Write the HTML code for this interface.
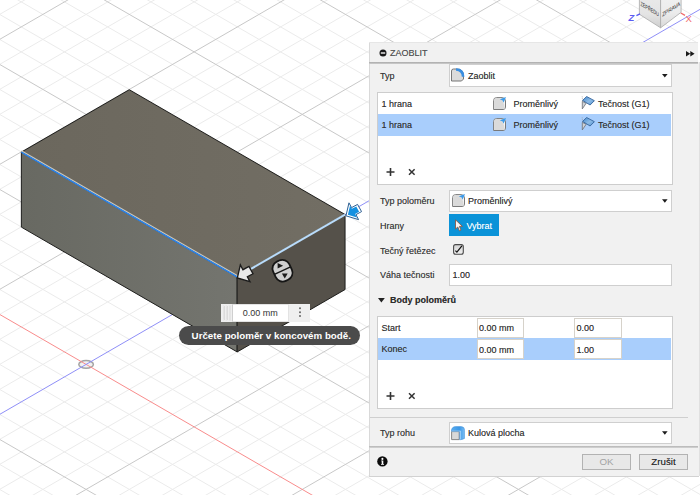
<!DOCTYPE html>
<html lang="cs"><head><meta charset="utf-8"><title>Zaoblit</title>
<style>
html,body{margin:0;padding:0;background:#fff;}
body{width:700px;height:495px;overflow:hidden;font-family:"Liberation Sans",sans-serif;font-size:9px;color:#333;}
#root{position:relative;width:700px;height:495px;overflow:hidden;}
#cv{position:absolute;left:0;top:0;}
.abs{position:absolute;}
#panel{text-shadow:0 0 .6px rgba(40,40,40,.5);position:absolute;left:369px;top:43px;width:330px;height:433px;background:#f1f1f1;box-sizing:border-box;border-left:1px solid #d9d9d9;box-shadow:0 1px 0 0 #d2d2d2, 1px 0 0 0 #e0e0e0, 0 -1px 0 0 #e6e6e6;}
#hdr{position:absolute;left:0;top:0;width:327px;height:19px;background:#f1f1f1;}
#hline{position:absolute;left:-1px;top:19px;width:329px;height:2px;background:linear-gradient(#a9a9a9,#cfcfcf);}
.lbl{position:absolute;left:10px;white-space:nowrap;line-height:10px;color:#3a3a3a;}
.dd{position:absolute;left:79px;width:223px;height:22px;background:#fff;border:1px solid #cfcfcf;box-sizing:border-box;}
.dd .txt{position:absolute;left:18px;top:5px;line-height:10px;white-space:nowrap;color:#333;}
.dd .arr{position:absolute;right:3.4px;top:8.2px;width:5.6px;height:3.6px;background:#1c1c1c;clip-path:polygon(0 0,100% 0,50% 100%);}
.box{position:absolute;left:7px;width:296px;background:#fff;border:1px solid #cdcdcd;box-sizing:border-box;}
.row{position:absolute;left:0;width:294px;height:21px;}
.row.sel{background:#a9cefc;height:22px;width:293px;}
.row span{position:absolute;top:6px;line-height:10px;white-space:nowrap;color:#333;}
.cell{position:absolute;width:47px;height:20px;background:#fff;border:1px solid #d6d2ca;box-sizing:border-box;}
.cell span{position:absolute;left:1.4px;top:5px;line-height:10px;color:#333;}
.btn{position:absolute;top:411px;height:16px;box-sizing:border-box;border:1px solid #b2b2b2;background:#e8e8e8;font-size:9.75px;line-height:14px;text-align:center;color:#2a2a2a;}

</style></head><body>
<div id="root">
<svg id="cv" width="700" height="495" viewBox="0 0 700 495">
<rect width="700" height="495" fill="#fff"/>
<path d="M0 -385.39 L700 19.43 M0 -360.39 L700 44.43 M0 -335.39 L700 69.43 M0 -285.39 L700 119.43 M0 -260.39 L700 144.43 M0 -235.39 L700 169.43 M0 -210.39 L700 194.43 M0 -160.39 L700 244.43 M0 -135.39 L700 269.43 M0 -110.39 L700 294.43 M0 -85.39 L700 319.43 M0 14.19 L700 -390.63 M0 -35.39 L700 369.43 M0 64.19 L700 -340.63 M0 -10.39 L700 394.43 M0 89.19 L700 -315.63 M0 14.61 L700 419.43 M0 114.19 L700 -290.63 M0 39.61 L700 444.43 M0 139.19 L700 -265.63 M0 89.61 L700 494.43 M0 189.19 L700 -215.63 M0 114.61 L700 519.43 M0 214.19 L700 -190.63 M0 139.61 L700 544.43 M0 239.19 L700 -165.63 M0 164.61 L700 569.43 M0 264.19 L700 -140.63 M0 214.61 L700 619.43 M0 314.19 L700 -90.63 M0 239.61 L700 644.43 M0 339.19 L700 -65.63 M0 264.61 L700 669.43 M0 364.19 L700 -40.63 M0 289.61 L700 694.43 M0 389.19 L700 -15.63 M0 339.61 L700 744.43 M0 439.19 L700 34.37 M0 364.61 L700 769.43 M0 464.19 L700 59.37 M0 389.61 L700 794.43 M0 489.19 L700 84.37 M0 414.61 L700 819.43 M0 514.19 L700 109.37 M0 464.61 L700 869.43 M0 564.19 L700 159.37 M0 489.61 L700 894.43 M0 589.19 L700 184.37 M0 614.19 L700 209.37 M0 639.19 L700 234.37 M0 689.19 L700 284.37 M0 714.19 L700 309.37 M0 739.19 L700 334.37 M0 764.19 L700 359.37 M0 814.19 L700 409.37 M0 839.19 L700 434.37 M0 864.19 L700 459.37 M0 889.19 L700 484.37" stroke="#ebebeb" stroke-width="1" fill="none"/>
<path d="M0 -310.39 L700 94.43 M0 -185.39 L700 219.43 M0 -60.39 L700 344.43 M0 39.19 L700 -365.63 M0 64.61 L700 469.43 M0 164.19 L700 -240.63 M0 189.61 L700 594.43 M0 289.19 L700 -115.63 M0 439.61 L700 844.43 M0 539.19 L700 134.37 M0 664.19 L700 259.37 M0 789.19 L700 384.37" stroke="#c8c8c8" stroke-width="1" fill="none"/>
<ellipse cx="86.1" cy="364.4" rx="7.3" ry="3.8" fill="#f1f1f1" stroke="#a4a4a4" stroke-width="1.5"/>
<path d="M0 314.61 L700 719.43" stroke="#f98c8c" stroke-width="1" fill="none"/>
<path d="M0 414.19 L700 9.37" stroke="#8f8ff8" stroke-width="1" fill="none"/>
<defs><linearGradient id="gl" x1="0" y1="0" x2="1" y2="0"><stop offset="0" stop-color="#686962"/><stop offset="1" stop-color="#74756f"/></linearGradient><linearGradient id="gt" x1="0" y1="0" x2="1" y2="0"><stop offset="0" stop-color="#6b675d"/><stop offset="1" stop-color="#726e64"/></linearGradient></defs>
<polygon points="21.36,152.12 129.26,89.72 345.06,214.52 237.16,276.92" fill="url(#gt)" stroke="#1e1e1c" stroke-width="1" stroke-linejoin="round"/>
<polygon points="21.36,152.12 237.16,276.92 237.16,351.92 21.36,227.12" fill="url(#gl)" stroke="#1e1e1c" stroke-width="1" stroke-linejoin="round"/>
<polygon points="237.16,276.92 345.06,214.52 345.06,289.52 237.16,351.92" fill="#55514a" stroke="#1e1e1c" stroke-width="1" stroke-linejoin="round"/>
<path d="M21.36,152.12 L237.16,276.92" stroke="#cfc9ba" stroke-width="1.3" transform="translate(0,-1.25)"/>
<path d="M21.36,152.12 L237.16,276.92" stroke="#2b86f0" stroke-width="1.45"/>
<path d="M237.16,276.92 L345.06,214.52" stroke="#b9dcfb" stroke-width="2"/>
<path d="M237.36 277.92 L240.36 264.92 L242.96 269.72 L248.96 266.52 L252.96 273.72 L247.36 276.72 L249.96 281.72 Z" fill="#e9e9e9" stroke="#1c1c1c" stroke-width="1.35" stroke-linejoin="miter"/>
<path d="M345.96 215.82 L348.96 202.82 L351.56 207.62 L357.56 204.42 L361.56 211.62 L355.96 214.62 L358.56 219.62 Z" fill="#fff" stroke="#2d5f93" stroke-width="1" stroke-linejoin="miter"/>
<path d="M345.96 215.82 L348.96 202.82 L351.56 207.62 L357.56 204.42 L361.56 211.62 L355.96 214.62 L358.56 219.62 Z" fill="#1590e0" transform="translate(353.9 211.23) scale(.72) translate(-354.3 -210.93)"/>
<g transform="translate(282.5 270.7) rotate(-25)"><rect x="-8.9" y="-10.6" width="17.8" height="21.2" rx="7.6" ry="7.6" fill="#cfcfcf" stroke="#161616" stroke-width="1.8"/><path d="M-8.9 0 H8.9" stroke="#161616" stroke-width="1.4"/><path d="M-2.6 -8.2 L-2.6 -2.6 L2.9 -5.4 Z" fill="#1b1b1b" transform="rotate(25 0 -5.4)"/><path d="M-2.9 3.2 L2.9 3.2 L0 8.2 Z" fill="#1b1b1b" transform="rotate(25 0 5.4)"/></g>
<defs><linearGradient id="gc1" x1="0" y1="0" x2="0" y2="1"><stop offset="0" stop-color="#e9e9e9"/><stop offset=".55" stop-color="#e4e4e4"/><stop offset="1" stop-color="#cfcfcf"/></linearGradient><linearGradient id="gc2" x1="0" y1="0" x2="0" y2="1"><stop offset="0" stop-color="#f0f0f0"/><stop offset=".5" stop-color="#ececec"/><stop offset="1" stop-color="#d9d9d9"/></linearGradient></defs>
<polygon points="639.4,-3 660.6,-3 660.6,27.8 639.4,14.3" fill="url(#gc1)" stroke="#a9a9a9" stroke-width=".8"/>
<polygon points="660.6,-3 681.1,-3 681.1,12.3 660.6,27.8" fill="url(#gc2)" stroke="#a9a9a9" stroke-width=".8"/>
<text transform="matrix(1 .62 0 1 640.4 5.4)" font-family="Liberation Sans, sans-serif" font-size="6" fill="#2a2a2a" textLength="18.4" lengthAdjust="spacingAndGlyphs">ZEPŘEDU</text>
<text transform="matrix(1 -.62 0 1 662.2 16.8)" font-family="Liberation Sans, sans-serif" font-size="6" fill="#2a2a2a" textLength="18" lengthAdjust="spacingAndGlyphs">ZPRAVA</text>
<path d="M636.4 15.6 L640 13.8" stroke="#5a5af0" stroke-width="1.3"/>
<path d="M680.8 13 L685 15.4" stroke="#f06a6a" stroke-width="1.3"/>
<text x="628.6" y="21.2" font-family="Liberation Sans, sans-serif" font-size="9.5" font-style="italic" font-weight="bold" fill="#5c5cf2">Z</text>
<text x="685.6" y="21.6" font-family="Liberation Sans, sans-serif" font-size="9.5" fill="#f26a6a">X</text>
</svg>
<!-- float input -->
<div class="abs" style="left:221px;top:304px;width:89px;height:18px;background:#efefef;"></div>
<div class="abs" style="left:232px;top:304px;width:57px;height:18px;background:#fff;box-sizing:border-box;border:1px solid #e3e3e3;border-left-color:#cfcfcf"></div>
<div class="abs" style="left:242.8px;top:308px;line-height:10px;color:#333;white-space:nowrap">0.00 mm</div>
<svg class="abs" style="left:222px;top:305px" width="10" height="16" viewBox="0 0 10 16"><path d="M1.5 1 l1.4 1 l-1.4 1 l1.4 1 l-1.4 1 l1.4 1 l-1.4 1 l1.4 1 l-1.4 1 l1.4 1 l-1.4 1 l1.4 1 l-1.4 1 l1.4 1 l-1.4 1 M4.5 1 l1.4 1 l-1.4 1 l1.4 1 l-1.4 1 l1.4 1 l-1.4 1 l1.4 1 l-1.4 1 l1.4 1 l-1.4 1 l1.4 1 l-1.4 1 l1.4 1 l-1.4 1" stroke="#cdcdcd" stroke-width=".7" fill="none"/><path d="M8 0.5 V15.5" stroke="#d9d9d9" stroke-width="1"/></svg>
<svg class="abs" style="left:298.3px;top:306.4px" width="4" height="13" viewBox="0 0 4 13"><circle cx="2" cy="2.2" r="1" fill="#666"/><circle cx="2" cy="6.2" r="1" fill="#666"/><circle cx="2" cy="10.1" r="1" fill="#666"/></svg>
<!-- tooltip -->
<div class="abs" style="left:178.6px;top:326px;width:181.4px;height:19px;border-radius:9.5px;background:#4b4b4b;"></div>
<div class="abs" style="left:191.6px;top:329.6px;font-size:9.75px;font-weight:bold;line-height:12px;color:#fff;white-space:nowrap">Určete poloměr v koncovém bodě.</div>

<div id="panel">
  <div id="hdr">
    <svg class="abs" style="left:9px;top:6.2px" width="8" height="8" viewBox="0 0 8 8"><circle cx="4" cy="4" r="3.5" fill="#1a1a1a"/><rect x="1.8" y="3.3" width="4.4" height="1.4" fill="#f1f1f1"/></svg>
    <div class="lbl" style="left:20px;top:5px;color:#555">ZAOBLIT</div>
    <svg class="abs" style="left:316px;top:8px" width="9" height="6" viewBox="0 0 9 6"><path d="M0 0 L4.3 2.7 L0 5.4 Z M4.3 0 L8.6 2.7 L4.3 5.4 Z" fill="#1a1a1a"/></svg>
  </div>
  <div id="hline"></div>
  <div class="abs" style="left:328px;top:-1px;width:2px;height:20px;background:#fff"></div>

  <div class="lbl" style="top:28px">Typ</div>
  <div class="dd" style="top:21px;height:23px">
    <svg class="abs ic" style="left:1.4px;top:3px" width="14" height="14" viewBox="0 0 14 14"><path d="M0.5 13 V3 Q0.5 1 2.5 1 H6 Q12.5 1 12.5 8 V11 L10.5 13 Z" fill="#dbdbdb" stroke="#777" stroke-width="1" stroke-linejoin="round"/><path d="M5 0.3 Q13.4 0.3 13.4 8.8 L10.8 8.8 Q10.6 3.2 5 2.8 Z" fill="#3a8fe2"/></svg>
    <div class="txt" style="top:6px">Zaoblit</div><div class="arr" style="top:9px"></div>
  </div>

  <div class="box" style="top:49px;height:93px">
    <div class="row" style="top:0px">
      <span style="left:3.6px">1 hrana</span>
      <svg class="abs" style="left:115px;top:4px" width="14" height="14" viewBox="0 0 14 14"><use href="#icvar"/></svg>
      <span style="left:135.6px">Proměnlivý</span>
      <svg class="abs" style="left:202.5px;top:3.2px" width="15" height="15" viewBox="0 0 15 15"><use href="#icflag"/></svg>
      <span style="left:220px">Tečnost (G1)</span>
    </div>
    <div class="row sel" style="top:21px">
      <span style="left:3.6px">1 hrana</span>
      <svg class="abs" style="left:115px;top:4px" width="14" height="14" viewBox="0 0 14 14"><use href="#icvar"/></svg>
      <span style="left:135.6px">Proměnlivý</span>
      <svg class="abs" style="left:202.5px;top:3.2px" width="15" height="15" viewBox="0 0 15 15"><use href="#icflag"/></svg>
      <span style="left:220px">Tečnost (G1)</span>
    </div>
    <svg class="abs" style="left:7.6px;top:74px" width="34" height="10" viewBox="0 0 34 10"><path d="M4.5 1 V9 M0.5 5 H8.5" stroke="#333" stroke-width="1.6" fill="none"/><path d="M23 2.2 L28.6 7.8 M28.6 2.2 L23 7.8" stroke="#333" stroke-width="1.5" fill="none"/></svg>
  </div>

  <div class="lbl" style="top:153px">Typ poloměru</div>
  <div class="dd" style="top:147px">
    <svg class="abs" style="left:1.6px;top:3px" width="14" height="14" viewBox="0 0 14 14"><use href="#icvar"/></svg>
    <div class="txt">Proměnlivý</div><div class="arr"></div>
  </div>

  <div class="lbl" style="top:178px">Hrany</div>
  <div class="abs" style="left:79px;top:171px;width:50px;height:22px;background:#0b93d8;">
    <svg class="abs" style="left:5px;top:5px" width="10" height="13" viewBox="0 0 10 13"><path d="M1.5 0.8 V10 L3.8 8 L5.4 11.8 L7 11.1 L5.4 7.4 L8.4 7.4 Z" fill="#f6f6f6" stroke="#8a5b4a" stroke-width="0.9" stroke-linejoin="round"/></svg>
    <div class="abs" style="left:17.4px;top:7px;line-height:10px;color:#fff;white-space:nowrap;text-shadow:0 0 .6px rgba(255,255,255,.5)">Vybrat</div>
  </div>

  <div class="lbl" style="top:203px">Tečný řetězec</div>
  <svg class="abs" style="left:83px;top:201px" width="12" height="12" viewBox="0 0 12 12"><defs><linearGradient id="gcb" x1="0" y1="0" x2="0" y2="1"><stop offset="0" stop-color="#d2d2d2"/><stop offset="1" stop-color="#f2f2f2"/></linearGradient></defs><rect x="0.6" y="0.6" width="9.7" height="9.7" rx="2" fill="url(#gcb)" stroke="#4a4a4a" stroke-width="1.1"/><path d="M2.4 6.6 L3.9 8.1 L8.9 1.9" stroke="#111" stroke-width="1.25" fill="none"/></svg>

  <div class="lbl" style="top:227px">Váha tečnosti</div>
  <div class="dd" style="top:221px;height:22px"><div class="txt" style="left:2.6px">1.00</div></div>

  <svg class="abs" style="left:8px;top:254.6px" width="7" height="5" viewBox="0 0 7 5"><path d="M0 0 H6.8 L3.4 4.4 Z" fill="#222"/></svg>
  <div class="lbl" style="left:20px;top:252px;font-weight:bold;color:#2e2e2e">Body poloměrů</div>

  <div class="box" style="top:273px;height:93px">
    <div class="row" style="top:0px">
      <span style="left:3.6px">Start</span>
      <div class="cell" style="left:98.6px;top:1px"><span style="top:4px">0.00 mm</span></div>
      <div class="cell" style="left:196px;top:1px;width:48px"><span style="top:4px">0.00</span></div>
    </div>
    <div class="row sel" style="top:21px">
      <span style="left:3.6px">Konec</span>
      <div class="cell" style="left:98.6px;top:1px"><span>0.00 mm</span></div>
      <div class="cell" style="left:196px;top:1px;width:48px"><span>1.00</span></div>
    </div>
    <svg class="abs" style="left:7.6px;top:74px" width="34" height="10" viewBox="0 0 34 10"><path d="M4.5 1 V9 M0.5 5 H8.5" stroke="#333" stroke-width="1.6" fill="none"/><path d="M23 2.2 L28.6 7.8 M28.6 2.2 L23 7.8" stroke="#333" stroke-width="1.5" fill="none"/></svg>
  </div>

  <div class="abs" style="left:0px;top:374px;width:318px;height:1px;background:#cfcfcf"></div>
  <div class="lbl" style="top:385px">Typ rohu</div>
  <div class="dd" style="top:379px">
    <svg class="abs" style="left:1.4px;top:2.6px" width="14" height="15" viewBox="0 0 14 15"><defs><linearGradient id="gkp" x1="0" y1="0" x2="1" y2="0"><stop offset="0" stop-color="#5aaef0"/><stop offset=".6" stop-color="#3b97e6"/><stop offset="1" stop-color="#79bdf3"/></linearGradient></defs><path d="M0.6 5.6 H8.2 V13.6 H0.6 Z" fill="#d9d9d9" stroke="#7d7d7d" stroke-width=".9"/><path d="M0.4 5.2 Q0.4 0.6 5 0.6 H10 Q13.6 0.6 13.6 4.2 V12.4 Q11.4 13.6 8.8 13.8 V5.2 Z" fill="url(#gkp)" stroke="#3a8ad6" stroke-width=".5"/><path d="M9.6 5 V13.4" stroke="#a9d6f8" stroke-width=".9"/><path d="M1 5 H9.6" stroke="#a9d6f8" stroke-width=".7"/></svg>
    <div class="txt">Kulová plocha</div><div class="arr"></div>
  </div>
  <div class="abs" style="left:-1px;top:403px;width:329px;height:2px;background:linear-gradient(#b4b4b4,#d6d6d6)"></div>

  <svg class="abs" style="left:6.9px;top:413.2px" width="11" height="11" viewBox="0 0 11 11"><circle cx="5.4" cy="5.4" r="5.2" fill="#0c0c0c"/><path d="M4.2 4.6 H6.3 V8 H7 V8.7 H4 V8 H4.7 V5.3 H4.2 Z" fill="#fff"/><circle cx="5.4" cy="2.9" r="1.05" fill="#fff"/></svg>
  <div class="btn" style="left:212px;width:49px;color:#a3a3a3;text-shadow:none">OK</div>
  <div class="btn" style="left:269px;width:49px;">Zrušit</div>

  <svg width="0" height="0" style="position:absolute"><defs>
    <g id="icvar"><path d="M0.6 12.5 V3.6 Q0.6 0.6 3.6 0.6 H9 Q12.5 0.6 12.5 4 V10 Q12.5 12.5 10 12.5 Z" fill="#f4f4f4" stroke="#7a7a7a" stroke-width="1"/><path d="M1.1 12 V3.6 Q1.1 1.1 3.6 1.1 H6.2 Q11.2 2.6 11.6 12 Z" fill="#dadada"/><path d="M6.8 2.2 L13 0 L10.5 5.8 L9.6 3.4 Z" fill="#3d9be9"/></g>
    <g id="icflag"><path d="M1.2 0.4 L1.6 5" stroke="#9a9a9a" stroke-width=".7" stroke-dasharray="1 .8"/><path d="M1.3 5.4 L5.2 7.2 L1.3 12.9 Z" fill="#cfd3d8" stroke="#6b6f75" stroke-width=".8" stroke-linejoin="round"/><path d="M1.6 4.4 L5.6 0.5 L13.4 4.7 L9.1 9 Z" fill="url(#gflag)" stroke="#34639b" stroke-width=".9" stroke-linejoin="round"/></g><linearGradient id="gflag" x1="0" y1="0" x2="1" y2="1"><stop offset="0" stop-color="#3f86cc"/><stop offset=".55" stop-color="#8ebce6"/><stop offset="1" stop-color="#4a8fd2"/></linearGradient>
  </defs></svg>
</div>

</div>
</body></html>
